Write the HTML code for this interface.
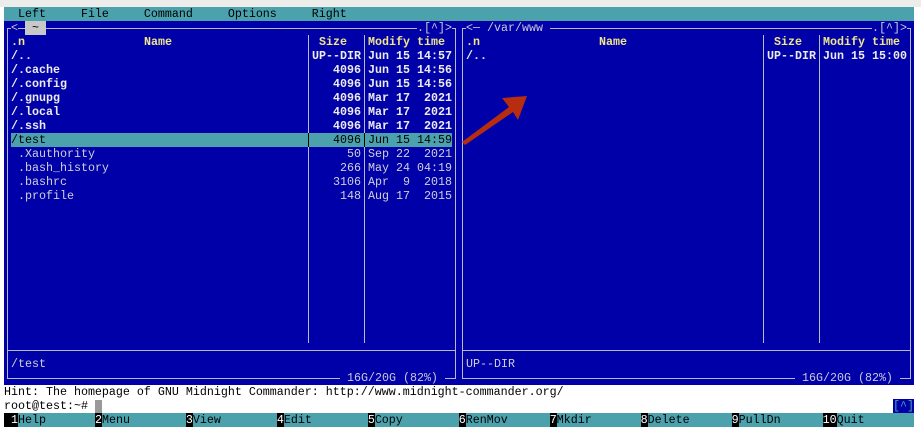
<!DOCTYPE html>
<html><head><meta charset="utf-8"><style>
*{margin:0;padding:0;box-sizing:border-box}
body{width:921px;height:429px;background:#fff;position:relative;overflow:hidden;font-family:"Liberation Mono","DejaVu Sans Mono",monospace;font-size:11.67px}
.a{position:absolute}
.t{position:absolute;white-space:pre;line-height:14px;height:14px}
.l{position:absolute;background:#b8b8d0}
.w{color:#ececec;font-weight:bold}
.f{color:#d0d0d8}
.y{color:#f0e68c;font-weight:bold}
.g{color:#c8c8d8}
.k{color:#000}
.n{background:#000;color:#fff}
</style></head><body>
<div class="a" style="left:0;top:0;width:921px;height:7px;background:#ececea"></div>
<div class="a" style="top:7px;left:4px;width:910px;height:14px;background:#4ba2ad"></div>
<div class="t k" style="left:4px;top:7px">  Left     File     Command     Options     Right</div>
<div class="a" style="left:4px;top:21px;width:910px;height:364px;background:#0000a8"></div>
<div class="l" style="left:7px;top:28px;width:449px;height:1px"></div>
<div class="l" style="left:7px;top:378px;width:449px;height:1px"></div>
<div class="l" style="left:7px;top:28px;width:1px;height:351px"></div>
<div class="l" style="left:455px;top:28px;width:1px;height:351px"></div>
<div class="l" style="left:7px;top:350px;width:449px;height:1px"></div>
<div class="l" style="left:308px;top:35px;width:1px;height:308px"></div>
<div class="l" style="left:364px;top:35px;width:1px;height:308px"></div>
<div class="l" style="left:462px;top:28px;width:449px;height:1px"></div>
<div class="l" style="left:462px;top:378px;width:449px;height:1px"></div>
<div class="l" style="left:462px;top:28px;width:1px;height:351px"></div>
<div class="l" style="left:910px;top:28px;width:1px;height:351px"></div>
<div class="l" style="left:462px;top:350px;width:449px;height:1px"></div>
<div class="l" style="left:763px;top:35px;width:1px;height:308px"></div>
<div class="l" style="left:819px;top:35px;width:1px;height:308px"></div>
<div class="t g" style="left:11px;top:21px;background:#0000a8">&lt;</div>
<div class="t k" style="left:25px;top:21px;width:21px;background:#c8c8c8"> ~ </div>
<div class="t g" style="left:417px;top:21px;background:#0000a8">.[^]&gt;</div>
<div class="t g" style="left:466px;top:21px;background:#0000a8">&lt;─ /var/www </div>
<div class="t g" style="left:872px;top:21px;background:#0000a8">.[^]&gt;</div>
<div class="t g" style="left:340px;top:371px;background:#0000a8"> 16G/20G (82%) </div>
<div class="t g" style="left:795px;top:371px;background:#0000a8"> 16G/20G (82%) </div>
<div class="a" style="left:11px;top:133px;width:441px;height:14px;background:#4ba2ad"></div>
<div class="a" style="left:308px;top:133px;width:1px;height:14px;background:#000"></div>
<div class="a" style="left:364px;top:133px;width:1px;height:14px;background:#000"></div>
<div class="t y" style="left:11px;top:35px">.n</div>
<div class="t y" style="left:144px;top:35px">Name</div>
<div class="t y" style="left:319px;top:35px">Size</div>
<div class="t y" style="left:368px;top:35px">Modify time</div>
<div class="t w" style="left:11px;top:49px">/..
/.cache
/.config
/.gnupg
/.local
/.ssh</div>
<div class="t w" style="left:312px;top:49px">UP--DIR
   4096
   4096
   4096
   4096
   4096</div>
<div class="t w" style="left:368px;top:49px">Jun 15 14:57
Jun 15 14:56
Jun 15 14:56
Mar 17  2021
Mar 17  2021
Mar 17  2021</div>
<div class="t k" style="left:11px;top:133px">/test</div>
<div class="t k" style="left:312px;top:133px">   4096</div>
<div class="t k" style="left:368px;top:133px">Jun 15 14:59</div>
<div class="t f" style="left:11px;top:147px"> .Xauthority
 .bash_history
 .bashrc
 .profile</div>
<div class="t f" style="left:312px;top:147px">     50
    266
   3106
    148</div>
<div class="t f" style="left:368px;top:147px">Sep 22  2021
May 24 04:19
Apr  9  2018
Aug 17  2015</div>
<div class="t f" style="left:11px;top:357px">/test</div>
<div class="t y" style="left:466px;top:35px">.n</div>
<div class="t y" style="left:599px;top:35px">Name</div>
<div class="t y" style="left:774px;top:35px">Size</div>
<div class="t y" style="left:823px;top:35px">Modify time</div>
<div class="t w" style="left:466px;top:49px">/..</div>
<div class="t w" style="left:767px;top:49px">UP--DIR</div>
<div class="t w" style="left:823px;top:49px">Jun 15 15:00</div>
<div class="t f" style="left:466px;top:357px">UP--DIR</div>
<svg class="a" style="left:0;top:0" width="921" height="429"><path d="M462,142 L509,107 L502,98 L527,96 L518,120 L513,112 L465,145 Z" fill="#b82c10"/></svg>
<div class="t k" style="left:4px;top:385px">Hint: The homepage of GNU Midnight Commander: http://www.midnight-commander.org/</div>
<div class="t k" style="left:4px;top:399px">root@test:~# </div>
<div class="a" style="left:95px;top:400px;width:7px;height:13px;background:#999"></div>
<div class="t" style="left:893px;top:399px;width:21px;background:#0000a8;color:#4ba2ad">[^]</div>
<div class="a" style="left:4px;top:413px;width:910px;height:14px;background:#4ba2ad"></div>
<div class="t k" style="left:4px;top:413px"><span class="n"> 1</span>Help       <span class="n">2</span>Menu        <span class="n">3</span>View        <span class="n">4</span>Edit        <span class="n">5</span>Copy        <span class="n">6</span>RenMov      <span class="n">7</span>Mkdir       <span class="n">8</span>Delete      <span class="n">9</span>PullDn      <span class="n">10</span>Quit</div>
</body></html>
